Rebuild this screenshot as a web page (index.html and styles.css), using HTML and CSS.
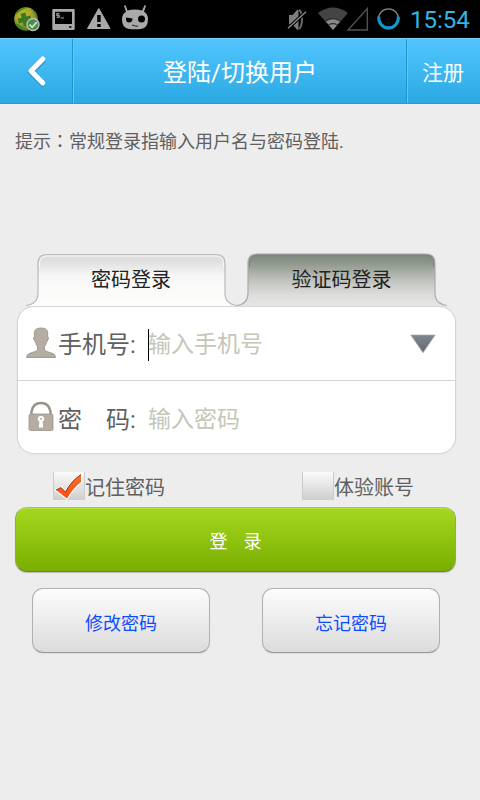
FILE: index.html
```html
<!DOCTYPE html>
<html lang="zh-CN">
<head>
<meta charset="utf-8">
<title>登陆/切换用户</title>
<link rel="stylesheet" href="styles.css">
</head>
<body>
<div class="status">
  <svg class="status-icons" width="160" height="38" viewBox="0 0 160 38">
    <defs>
      <radialGradient id="globe" cx=".4" cy=".35" r=".65"><stop offset="0" stop-color="#c8b72c"/><stop offset=".55" stop-color="#a6a427"/><stop offset="1" stop-color="#5c7419"/></radialGradient>
    </defs>
    <circle cx="26" cy="19" r="11.8" fill="url(#globe)"/>
    <path d="M15 15c2-5 7-8 12-7-5 1-8 4-12 7zM15 23c4 1 8 4 11 7-5 0-9-3-11-7zM30 8c4 2 7 6 7 10-2-4-4-7-7-10z" fill="#3d8a25"/>
    <path d="M22 13h5v4h4v5h-4v4h-5v-4h-4v-5h4z" fill="#3c7a22" transform="rotate(-14 24.500 19)"/>
    <circle cx="33" cy="24.500" r="6" fill="#4b8d46" stroke="#b8c0b5" stroke-width="1.400"/>
    <path d="M29.500 24.500l2.700 2.700 4.600-5" fill="none" stroke="#d5d9d3" stroke-width="1.700"/>
    <path fill="#a9a9a9" fill-rule="evenodd" d="M53.500 9h20q1.200 0 1.200 1.200v18.600q0 1.200-1.200 1.200h-20q-1.200 0-1.200-1.200V10.200Q52.300 9 53.500 9zM55 11.700V24h17V11.700zM69 26.200v1.500h2.500v-1.500z"/>
    <path d="M59.500 13.700h-3v1.700h3v1.900h-3M58 12.800v5.300M60.500 18h3.500" fill="none" stroke="#a9a9a9" stroke-width=".9"/>
    <path fill="#a9a9a9" stroke="#a9a9a9" stroke-linejoin="round" d="M98.800 8.500L110 28.500H87.500z"/>
    <path fill="#000" d="M97.200 15h3.500v7h-3.500zM97.200 24h3.500v3h-3.500z"/>
    <path fill="#a9a9a9" d="M124 5.800l1.400-.7 2.200 5.500q7-2 14.500 0l2.600-5.500 1.300.7-2 6q4 2.200 4 7.500 0 9-7 9.600-6 .8-12 0-7-.6-7-9.600 0-5.300 4-7.500z"/>
    <path d="M126 17.500l6.500 1q0 4-3.500 4t-3-5z" fill="#000"/><circle cx="141.500" cy="19" r="3.500" fill="#000"/>
    <path d="M132 25.300h2l1 .8h3" stroke="#222" stroke-width="1" fill="none"/>
  </svg>
  <svg class="status-icons" width="125" height="38" viewBox="280 0 125 38">
    <path d="M289 15h3.500l4.500-5q1-.8 1.500 0V29.500q-.5.800-1.500 0l-4.500-5H289z" fill="#7d7d7d"/>
    <path d="M299 10q3 1.500 3 9t-3 10" fill="none" stroke="#666" stroke-width="2"/>
    <path d="M287.500 28.800l18-16.500" stroke="#000" stroke-width="3.400"/><path d="M288 28.300l18-16.500" stroke="#8a8a8a" stroke-width="1.400"/>
    <path d="M333 30L318 13q15-11 30 0z" fill="#444"/>
    <path d="M333 30l-7.500-9q7.500-5 15 0z" fill="#8a8a8a"/>
    <path d="M325 21.500q8-6 16 0M328.500 25q4.500-3 9 0" fill="none" stroke="#333" stroke-width="1.500"/>
    <path d="M367.300 8.500v21.500h-19.300z" fill="none" stroke="#515151" stroke-width="1.400"/>
    <circle cx="388.500" cy="18.800" r="10" fill="none" stroke="#888" stroke-width="1.200"/>
    <path d="M378.800 16.600a9.800 9.800 0 1 0 19.400 0" fill="none" stroke="#0d99cc" stroke-width="3"/>
  </svg>
  <span class="clock">15:54</span>
</div>
<header class="bar">
  <div class="back">
    <svg width="72" height="64" viewBox="0 0 72 64"><path d="M42.500 21L31 32.500l11.500 11.500" transform="translate(0 1)" fill="none" stroke="#1684bb" stroke-opacity=".55" stroke-width="5.500" stroke-linecap="round"/><path d="M42.800 20L31 32l11.800 12" fill="none" stroke="#fff" stroke-width="5" stroke-linecap="round" stroke-linejoin="round"/></svg>
  </div>
  <h1 class="title">登陆/切换用户</h1>
  <div class="register">注册</div>
</header>
<main>
  <p class="tip">提示<span class="colon" lang="zh-TW">：</span>常规登录指输入用户名与密码登陆.</p>
  <div class="tabs">
    <div class="tab">
      <svg class="tab-shape" width="212" height="54" viewBox="0 0 212 54">
        <defs><linearGradient id="light" x1="0" y1="0" x2="0" y2="1"><stop offset="0" stop-color="#ddd"/><stop offset=".12" stop-color="#dfdfdf"/><stop offset=".42" stop-color="#f7f7f7"/><stop offset="1" stop-color="#fdfdfb"/></linearGradient></defs>
        <path d="M0 53Q12 51 12 40V10Q12 1.500 21 1.500H190Q199 1.500 199 10V40Q199 51 211 53z" fill="url(#light)"/>
        <path d="M13.500 14V10Q14 3 21 3H190Q197 3 197.500 10v4" fill="none" stroke="#fff" stroke-opacity=".8"/>
        <path d="M0 52.500Q12 51 12 40V10Q12 1.500 21 1.500H190Q199 1.500 199 10V40Q199 51 211 52.500" fill="none" stroke="#b9b9b9" stroke-width="1.200"/>
      </svg>
      <span class="tab-text">密码登录</span>
    </div>
    <div class="tab">
      <svg class="tab-shape" width="212" height="54" viewBox="0 0 212 54">
        <defs><linearGradient id="dark" x1="0" y1="0" x2="0" y2="1"><stop offset="0" stop-color="#7e887c"/><stop offset=".15" stop-color="#8c9489"/><stop offset=".5" stop-color="#bfc2bd"/><stop offset=".8" stop-color="#dedfdd"/><stop offset="1" stop-color="#e6e6e5"/></linearGradient></defs>
        <path d="M0 53Q11 51 11 40V10Q11 1 20 1H189Q198 1 198 10V40Q198 51 210 53z" fill="url(#dark)"/>
        <path d="M0 52.500Q11 51 11 40V10Q11 1 20 1H189Q198 1 198 10V40Q198 51 210 52.500" fill="none" stroke="#aaa" stroke-width="1.200"/>
        <path d="M12.500 14V10Q13 2.500 20 2.500H189Q196 2.500 196.500 10V14" fill="none" stroke="#7b8478"/>
      </svg>
      <span class="tab-text tab-text-right">验证码登录</span>
    </div>
  </div>
  <section class="panel">
    <div class="row">
      <svg class="row-icon" width="32" height="34" viewBox="0 0 32 34"><path d="M16 2q5.500 0 6.500 3.500.5 2 0 5 1.500 0 .6 3-.5 2-1.600 2.500Q21 19 19.500 20.500V24q1 1.500 7 3 4 1 4 4.500H1.500Q1.500 28 5.500 27q6-1.500 7-3V20.500Q11 19 10.500 16 9.400 15.500 8.900 13.500 8 10.500 9.500 10.500 9 7 9.500 5.500 10.500 2 16 2z" fill="#b5ada3" stroke="#938d85" stroke-width=".8"/></svg>
      <span class="label">手机号:</span>
      <span class="field field-active">输入手机号</span>
      <svg class="arrow" width="26" height="20" viewBox="0 0 26 20"><defs><linearGradient id="arrow" x1="0" y1="0" x2="0" y2="1"><stop offset="0" stop-color="#81868f"/><stop offset="1" stop-color="#656a70"/></linearGradient></defs><path d="M.8 1h24.400L13 18.700z" fill="url(#arrow)" stroke="#a7abb2" stroke-width=".7"/></svg>
    </div>
    <div class="row row-second">
      <svg class="row-icon" width="32" height="34" viewBox="0 0 32 34"><path d="M6.500 15V11.500Q8 3 16 3T25.500 11.500V15" fill="none" stroke="#99928a" stroke-width="2.400"/><rect x="4" y="14" width="24" height="16.500" rx="1.500" fill="#b5ada3" stroke="#99928a" stroke-width=".8"/><path d="M16 16a3 3 0 0 1 1.600 5.700l.6 5.800h-4.400l.6-5.800A3 3 0 0 1 16 16z" fill="#fff"/><circle cx="16" cy="18.800" r=".9" fill="#999"/></svg>
      <span class="label">密　码:</span>
      <span class="field">输入密码</span>
    </div>
  </section>
  <div class="checks">
    <label class="check"><span class="box"><svg width="32" height="28" viewBox="0 0 32 28"><defs><linearGradient id="tick" x1="0" y1="0" x2="0" y2="1"><stop offset="0" stop-color="#f47425"/><stop offset="1" stop-color="#ff4715"/></linearGradient></defs><path d="M3 18l5-2.500 4.500 4.500Q18 9 28 2.500V10Q20 16 14 26.500z" fill="url(#tick)" stroke="#fff" stroke-width="2.500" stroke-linejoin="round"/><path d="M3 18l5-2.500 4.500 4.500Q18 9 28 2.500V10Q20 16 14 26.500z" fill="url(#tick)"/><path d="M3 18l5-2.500 4.500 4.500Q18 9 28 2.500" fill="none" stroke="#843b20"/></svg></span>记住密码</label>
    <label class="check"><span class="box"></span>体验账号</label>
  </div>
  <div class="login"><span>登</span><span>录</span></div>
  <div class="links">
    <div class="button">修改密码</div>
    <div class="button">忘记密码</div>
  </div>
</main>
</body>
</html>
```
FILE: styles.css
```css
* { box-sizing: border-box; }
body {
  margin: 0;
  width: 480px;
  height: 800px;
  overflow: hidden;
  background: #ededed;
  color: #606060;
  font-family: Roboto, "Noto Sans CJK SC", sans-serif;
}
svg { display: block; flex: none; }
.status {
  display: flex;
  justify-content: space-between;
  height: 38px;
  background: #000;
}
.status-icons:nth-child(2) { margin-left: auto; }
.clock {
  width: 75px;
  padding-left: 5px;
  color: #33b5e5;
  font-size: 24px;
  line-height: 40px;
}
.bar {
  display: flex;
  height: 66px;
  color: #fff;
  background: linear-gradient(#52c5fd, #2ba9e3);
  border-top: 1px solid #75d2ff;
  border-bottom: 1px solid #299bd0;
}
.back { width: 73px; border-right: 1px solid #1e98d4; }
.title {
  flex: 1;
  margin: 0;
  border-left: 1px solid #5bc8fa;
  border-right: 1px solid #1e98d4;
  font-size: 24px;
  font-weight: 400;
  text-align: center;
  line-height: 64px;
  padding-top: 2px;
}
.register {
  width: 73px;
  border-left: 1px solid #5bc8fa;
  font-size: 21px;
  padding: 2px 0 0 14px;
  line-height: 64px;
}
.tip { height: 28px; margin: 24px 15px 0; font-size: 18px; line-height: 28px; white-space: nowrap; }
.colon { font-family: "Noto Sans CJK TC", sans-serif; line-height: 1; }
.tabs { display: flex; margin: 97px 0 0 26px; height: 53px; }
.tab { position: relative; width: 211px; }
.tab-shape { position: absolute; left: 0; top: 0; }
.tab-text {
  position: relative;
  display: block;
  color: #222;
  font-size: 20px;
  line-height: 52px;
  text-align: center;
  padding: 1px 1px 0 0;
}
.tab-text-right { padding-right: 2px; }
.panel {
  width: 439px;
  height: 148px;
  margin-left: 17px;
  background: #fff;
  border: 1px solid #d5d5d5;
  border-radius: 17px;
  box-shadow: 0 0 2px #ddd;
}
.row { display: flex; align-items: center; height: 73px; padding-left: 7px; }
.row-second { height: 74px; border-top: 1px solid #d2d2d2; }
.row-icon { margin-top: -1px; }
.label { width: 91px; padding: 2px 0 0 1px; font-size: 24px; line-height: 36px; white-space: nowrap; }
.field { margin-top: 2px; color: #c5c6b8; font-size: 23px; line-height: 32px; box-shadow: inset 1px 0 transparent; }
.field-active { box-shadow: inset 1px 0 #000; }
.row-second .label { padding-top: 4px; }
.row-second .field { margin-top: 4px; }
.arrow { margin-left: auto; margin-right: 19px; }
.checks { display: flex; height: 28px; margin: 18px 0 7px 53px; }
.check { display: flex; width: 249px; font-size: 20px; line-height: 32px; white-space: nowrap; }
.check:last-child { width: 120px; }
.box {
  width: 32px;
  height: 28px;
  flex: none;
  background: linear-gradient(#fafafa, #cecece);
  box-shadow: inset 1px 0 #ccc, inset -1px 0 #ccc;
}
.login {
  display: flex;
  justify-content: center;
  gap: 16px;
  width: 441px;
  height: 65px;
  margin-left: 15px;
  border: 1px solid #8fae4d;
  border-top-color: #a6c361;
  border-bottom-color: #65882c;
  border-radius: 12px;
  background: linear-gradient(#a4d81e, #79ae02);
  box-shadow: inset 0 1px #b6e241, 0 1px 1px #bbb;
  color: #fff;
  font-size: 18px;
  line-height: 67px;
}
.links { display: flex; gap: 52px; margin: 16px 0 0 32px; }
.button {
  width: 178px;
  height: 65px;
  border: 1px solid #b0b0b0;
  border-bottom-color: #999;
  border-radius: 11px;
  background: linear-gradient(#fcfcfc, #dcdcdc);
  box-shadow: inset 0 1px #fff, 0 1px 1px #ddd;
  color: #0b4cff;
  font-size: 18px;
  line-height: 69px;
  text-align: center;
}
```
